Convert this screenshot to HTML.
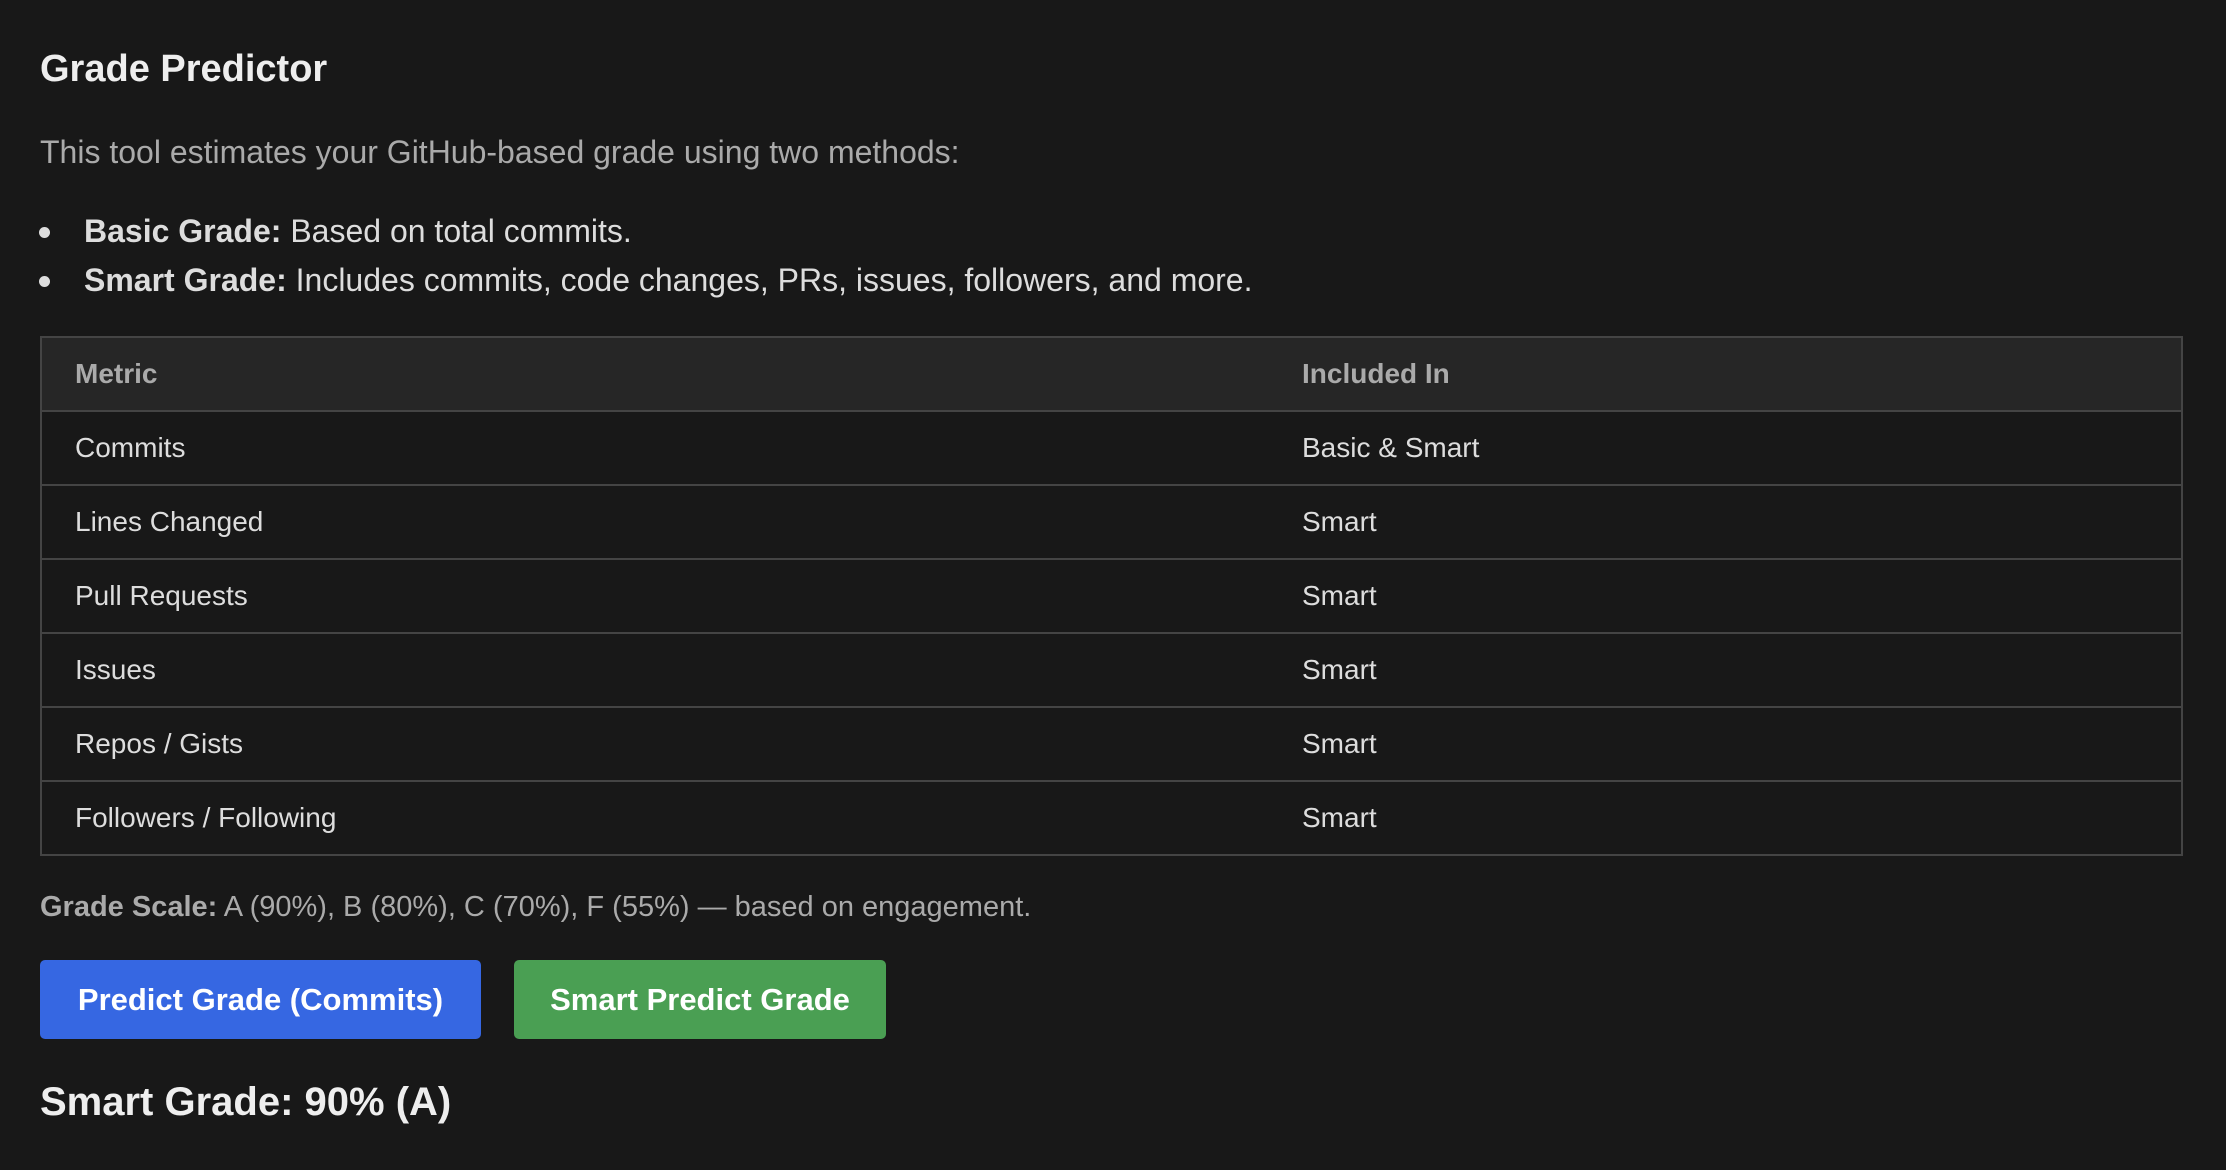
<!DOCTYPE html>
<html><head><meta charset="utf-8"><style>
*{margin:0;padding:0;box-sizing:border-box}
body{width:2226px;height:1170px;background:#181818;font-family:"Liberation Sans",sans-serif;color:#ddd;position:relative;overflow:hidden}
.a{position:absolute;white-space:nowrap}
h2{position:absolute;left:40px;top:48px;font-size:38px;font-weight:600;color:#eee}
.dot{position:absolute;left:39px;width:11px;height:11px;border-radius:50%;background:#ddd}
table{position:absolute;left:40px;top:336px;width:2143px;border-collapse:collapse;border:2px solid #444}
td,th{height:74px;border-top:2px solid #444;font-size:28px;text-align:left;padding-left:33px;color:#ddd;font-weight:normal}
th{background:#262626;color:#aaa;font-weight:bold}
td:nth-child(2),th:nth-child(2){width:880px;padding-left:0}
.btn{position:absolute;top:960px;height:79px;border-radius:5px;color:#fff;font-size:31px;font-weight:bold;display:flex;align-items:center;justify-content:center}
</style></head><body>
<h2>Grade Predictor</h2>
<div class="a" style="left:40px;top:134px;font-size:32px;color:#aaa">This tool estimates your GitHub-based grade using two methods:</div>
<div class="dot" style="top:227px"></div>
<div class="a" style="left:84px;top:213px;font-size:32px"><b>Basic Grade:</b> Based on total commits.</div>
<div class="dot" style="top:276px"></div>
<div class="a" style="left:84px;top:262px;font-size:32px"><b>Smart Grade:</b> Includes commits, code changes, PRs, issues, followers, and more.</div>
<table>
<tr><th>Metric</th><th>Included In</th></tr>
<tr><td>Commits</td><td>Basic &amp; Smart</td></tr>
<tr><td>Lines Changed</td><td>Smart</td></tr>
<tr><td>Pull Requests</td><td>Smart</td></tr>
<tr><td>Issues</td><td>Smart</td></tr>
<tr><td>Repos / Gists</td><td>Smart</td></tr>
<tr><td>Followers / Following</td><td>Smart</td></tr>
</table>
<div class="a" style="left:40px;top:891px;font-size:29px;color:#aaa"><b>Grade Scale:</b> A (90%), B (80%), C (70%), F (55%) — based on engagement.</div>
<div class="btn" style="left:40px;width:441px;background:#3667e2">Predict Grade (Commits)</div>
<div class="btn" style="left:514px;width:372px;background:#4a9f53">Smart Predict Grade</div>
<div class="a" style="left:40px;top:1080px;font-size:40px;font-weight:600;color:#eee">Smart Grade: 90% (A)</div>
</body></html>
